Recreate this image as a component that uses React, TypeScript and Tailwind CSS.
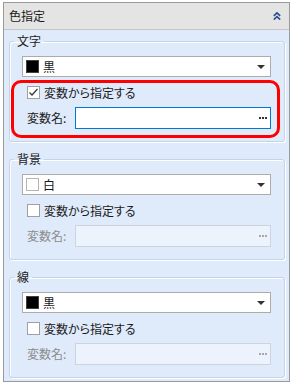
import React from "react";

const font = "font-['Noto_Sans_CJK_JP','Noto_Sans',sans-serif] [font-feature-settings:'palt']";

function Swatch({ color }: { color: "black" | "white" }) {
  return (
    <span
      className={
        color === "black"
          ? "w-[13px] h-[13px] bg-black border border-[#404040] shrink-0"
          : "w-[13px] h-[13px] bg-white border border-[#b4b4b4] shrink-0"
      }
    />
  );
}

function Dropdown({ color, label }: { color: "black" | "white"; label: string }) {
  return (
    <div className="h-[21px] bg-white border border-[#acacac] flex items-center pl-[3px] pr-[5px]">
      <Swatch color={color} />
      <span className="ml-[4px] text-[12px] leading-[16px] text-[#1a1a1a]">{label}</span>
      <span className="ml-auto w-0 h-0 border-l-[4px] border-r-[4px] border-t-[4px] border-l-transparent border-r-transparent border-t-[#333]" />
    </div>
  );
}

function Dots({ color }: { color: string }) {
  return (
    <span className="flex gap-[1px] ml-auto mr-[3px]">
      <span className={`w-[2px] h-[2px] ${color}`} />
      <span className={`w-[2px] h-[2px] ${color}`} />
      <span className={`w-[2px] h-[2px] ${color}`} />
    </span>
  );
}

function Group({
  title,
  color,
  label,
  active,
}: {
  title: string;
  color: "black" | "white";
  label: string;
  active?: boolean;
}) {
  return (
    <fieldset className="border border-[#c6d3e6] rounded-[3px] shadow-[inset_1px_1px_0_#ffffff,1px_1px_0_#ffffff] pl-[12px] pr-[13px] pt-[7px] pb-[3px]">
      <legend className="-ml-[8px] px-[3px] text-[12px] leading-[16px] text-[#1a1a1a]">{title}</legend>
      <Dropdown color={color} label={label} />
      <div
        className={
          active
            ? "mt-[3px] -ml-[11px] -mr-[9px] border-[3px] border-[#ff0000] rounded-[10px] pl-[13px] pr-[6px] pt-[3px] pb-[6px]"
            : "mt-[3px] -ml-[11px] -mr-[9px] border-[3px] border-transparent rounded-[10px] pl-[13px] pr-[6px] pt-[3px] pb-[6px]"
        }
      >
        <div className="flex items-center h-[13px]">
          <span className="w-[13px] h-[13px] bg-white border border-[#a0a0a0] flex items-center justify-center shrink-0">
            {active && (
              <svg width="11" height="11" viewBox="0 0 11 11">
                <polyline points="1.5,5.5 4,8 9.5,2" fill="none" stroke="#3a3a3a" strokeWidth="1.3" />
              </svg>
            )}
          </span>
          <span className="ml-[4px] text-[12px] leading-[16px] text-[#1a1a1a]">変数から指定する</span>
        </div>
        <div className="flex items-center mt-[8px]">
          <span
            className={
              active
                ? "w-[48px] text-[12px] leading-[16px] text-[#1a1a1a]"
                : "w-[48px] text-[12px] leading-[16px] text-[#8c8c8c]"
            }
          >
            変数名:
          </span>
          <div
            className={
              active
                ? "flex-1 h-[22px] bg-white border border-[#0078d7] flex items-center"
                : "flex-1 h-[22px] bg-[#edf3fd] border border-[#cbd4df] flex items-center"
            }
          >
            <Dots color={active ? "bg-[#333333]" : "bg-[#a8a8a8]"} />
          </div>
        </div>
      </div>
    </fieldset>
  );
}

export default function App() {
  return (
    <div className={`w-[292px] h-[385px] bg-white pt-[2px] pl-[3px] ${font}`}>
      <div className="w-[287px] h-[380px] border border-[#9a9a9a] flex flex-col">
        <div className="h-[27px] bg-[#e4e4e4] border-b border-[#c4c4c4] flex items-center pl-[5px] pr-[8px] shrink-0">
          <span className="text-[12px] leading-[16px] text-[#1a1a1a]">色指定</span>
          <svg className="ml-auto" width="8" height="8" viewBox="0 0 8 8">
            <polyline points="0.8,3.8 4,0.8 7.2,3.8" fill="none" stroke="#2b4f8c" strokeWidth="1.6" />
            <polyline points="0.8,7.6 4,4.6 7.2,7.6" fill="none" stroke="#2b4f8c" strokeWidth="1.6" />
          </svg>
        </div>
        <div className="flex-1 bg-[#dfeafb] pt-[3px] pl-[5px] pr-[4px] pb-[3px] flex flex-col gap-[9px]">
          <Group title="文字" color="black" label="黒" active />
          <Group title="背景" color="white" label="白" />
          <Group title="線" color="black" label="黒" />
        </div>
      </div>
    </div>
  );
}
